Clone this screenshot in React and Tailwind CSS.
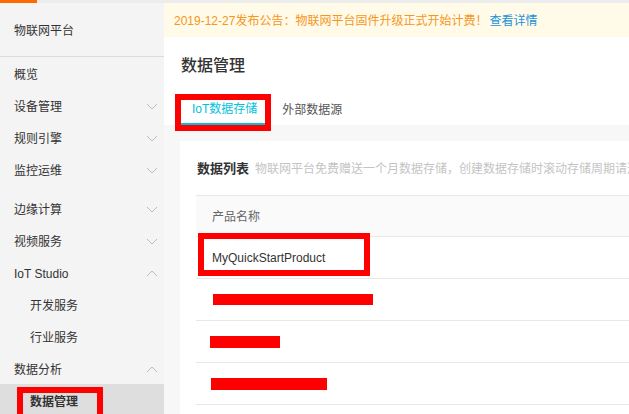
import React from 'react';

const FONT = { fontFamily: '"Liberation Sans", "Noto Sans CJK SC", sans-serif' };

const Chevron = ({ up = false }) => (
  <svg width="12" height="7" viewBox="0 0 12 7" className="shrink-0">
    <polyline
      points={up ? '1,6 6,1 11,6' : '1,1 6,6 11,1'}
      fill="none"
      stroke="#bdbdbd"
      strokeWidth="1"
    />
  </svg>
);

const MenuItem = ({ label, sub = false, chevron, active = false }) => (
  <div
    className={`h-[32px] shrink-0 flex items-center justify-between pt-[3px] pr-[6px] text-[12px] text-[#333] ${
      sub ? 'pl-[30px]' : 'pl-[14px]'
    } ${active ? 'bg-[#dedede] font-bold' : ''}`}
  >
    <span>{label}</span>
    {chevron && <Chevron up={chevron === 'up'} />}
  </div>
);

const Sidebar = () => (
  <div className="w-[164px] shrink-0 bg-[#f4f4f4] flex flex-col overflow-hidden">
    <div className="h-[54px] shrink-0 flex items-center pt-[2px] pl-[14px] text-[12px] text-[#333] border-b border-[#dcdcdc]">
      物联网平台
    </div>
    <MenuItem label="概览" />
    <MenuItem label="设备管理" chevron="down" />
    <MenuItem label="规则引擎" chevron="down" />
    <MenuItem label="监控运维" chevron="down" />
    <div className="h-[7px] shrink-0" />
    <MenuItem label="边缘计算" chevron="down" />
    <MenuItem label="视频服务" chevron="down" />
    <MenuItem label="IoT Studio" chevron="up" />
    <MenuItem label="开发服务" sub />
    <MenuItem label="行业服务" sub />
    <MenuItem label="数据分析" chevron="up" />
    <MenuItem label="数据管理" sub active />
  </div>
);

const rows = [
  { name: 'MyQuickStartProduct' },
  { bar: 'w-[160px] h-[11px] ml-[1px]' },
  { bar: 'w-[70px] h-[12px] ml-[-2px]' },
  { bar: 'w-[116px] h-[12px] ml-[-1px]' },
];

export default function App() {
  return (
    <div className="relative w-[629px] h-[414px] overflow-hidden flex flex-col bg-white" style={FONT}>
      {/* barra superior */}
      <div className="h-[3px] flex shrink-0">
        <div className="w-[37px] bg-[#ff6a00]" />
        <div className="flex-1 bg-[#ececec]" />
      </div>

      <div className="flex flex-1 min-h-0">
        <Sidebar />

        <div className="flex-1 flex flex-col min-w-0">
          {/* anuncio */}
          <div className="h-[34px] shrink-0 bg-[#fffbe8] flex items-center pt-[1px] pl-[10px] text-[12px] whitespace-nowrap">
            <span className="text-[#f5961f]">2019-12-27发布公告：物联网平台固件升级正式开始计费！</span>
            <span className="text-[#2192dc] ml-[2px]">查看详情</span>
          </div>

          {/* título y pestañas */}
          <div className="pl-[17px] pt-[17px] shrink-0">
            <div className="text-[16px] leading-[24px] text-[#333] font-medium">数据管理</div>
            <div className="flex mt-[16px]">
              <div className="h-[31px] flex items-center pt-[1px] px-[11px] text-[12px] text-[#00c1de] border-b-2 border-[#00c1de]">
                IoT数据存储
              </div>
              <div className="h-[31px] flex items-center pt-[1px] px-[14px] text-[12px] text-[#555]">
                外部数据源
              </div>
            </div>
          </div>

          {/* contenido */}
          <div className="flex-1 bg-[#f7f7f7] pl-[16px] pt-[16px] min-h-0">
            <div className="bg-white h-full pl-[16px] pt-[18px]">
              <div className="flex items-baseline whitespace-nowrap overflow-hidden pl-[1px]">
                <span className="text-[13px] leading-[20px] font-bold text-[#333]">数据列表</span>
                <span className="text-[12px] text-[#c4c4c4] ml-[6px]">
                  物联网平台免费赠送一个月数据存储，创建数据存储时滚动存储周期请选择合适的周期
                </span>
              </div>

              <div className="mt-[16px] border-t border-[#e8e8e8]">
                <div className="h-[41px] bg-[#fafafa] flex items-center pt-[1px] pl-[16px] text-[12px] text-[#666] border-b border-[#e8e8e8]">
                  产品名称
                </div>
                {rows.map((r, i) => (
                  <div
                    key={i}
                    className="h-[42px] flex items-center pl-[16px] text-[12px] text-[#333] border-b border-[#e8e8e8]"
                  >
                    {r.name ? r.name : <span className={`block bg-[#ff0000] ${r.bar}`} />}
                  </div>
                ))}
              </div>
            </div>
          </div>
        </div>
      </div>

      {/* marcas rojas */}
      <div className="absolute left-[175px] top-[94px] w-[96px] h-[37px] border-[6px] border-[#ff0000]" />
      <div className="absolute left-[198px] top-[233px] w-[172px] h-[43px] border-[6px] border-[#ff0000]" />
      <div className="absolute left-[17px] top-[387px] w-[86px] h-[40px] border-[6px] border-[#ff0000]" />
    </div>
  );
}
